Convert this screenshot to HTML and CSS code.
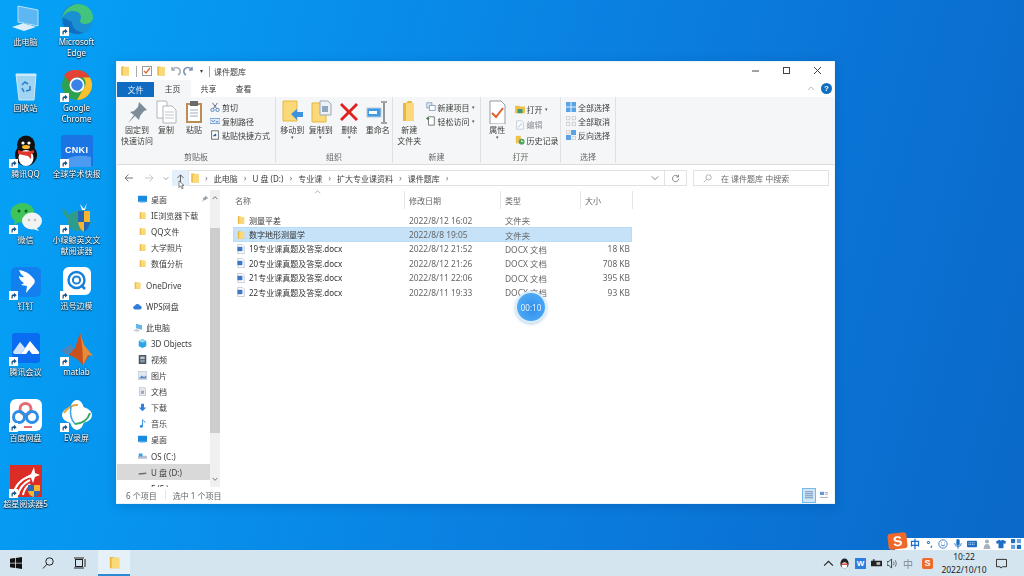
FILE: index.html
```html
<!DOCTYPE html>
<html lang="zh-CN">
<head>
<meta charset="utf-8">
<title>课件题库</title>
<link rel="stylesheet" href="styles.css">
</head>
<body>
<svg class="defs" width="0" height="0">
  <defs>
    <symbol id="folder" viewBox="0 0 16 16">
      <path d="M3 2h4l1 1h5v11H3z" fill="#e8b83e"/>
      <path d="M5 3h8v11H5z" fill="#fbd978"/>
    </symbol>
    <symbol id="doc" viewBox="0 0 12 14">
      <path d="M1.500.5h6l3 3v10h-9z" fill="#fff" stroke="#a9b4c4"/>
      <rect x="1" y="4" width="7" height="6" rx="1" fill="#3f78c6"/>
    </symbol>
    <symbol id="arrow" viewBox="0 0 9 9">
      <rect width="9" height="9" fill="#fff"/>
      <path d="M2.500 7.500V4.800q0-1.600 2-1.600H5V1.800l2.600 2.400L5 6.500V5H4.400q-.7 0-.7.8v1.700z" fill="#16558c"/>
    </symbol>
  </defs>
</svg>
<main class="desktop">
  <div class="shortcut"><svg class="ico" viewBox="0 0 32 32"><path d="M8 3l20 4v16L8 19z" fill="#5cb7f2" stroke="#b6e2fb"/><path d="M2 24l12-4 12 4-12 4z" fill="#dbeef9"/><path d="M14 20l6 2" stroke="#8fc4e6"/></svg><span class="lbl">此电脑</span></div>
  <div class="shortcut"><svg class="ico" viewBox="0 0 32 32"><circle cx="16" cy="16" r="15.500" fill="#1a8fd1"/><path d="M1 17C2 6 11 1 17 1c8 0 15 6 15 13 0 5-4 7-8 7-3 0-5-1-5-3 0-1 1-2 1-4 0-3-3-6-8-6-6 0-10 4-11 9z" fill="#43c47d"/><path d="M11 19c0 6 5 11 12 10-4 3-12 3-17-2-4-4-5-9-4-13 2 2 5 3 9 5z" fill="#0f6fc0"/></svg><svg class="sc" viewBox="0 0 9 9"><use href="#arrow"/></svg><span class="lbl">Microsoft<br>Edge</span></div>
  <div class="shortcut"><svg class="ico" viewBox="0 0 32 32"><path d="M6 5h20l-2 26H9z" fill="#9fd4f3" stroke="#cfeafa"/><path d="M6 5h20v2H6z" fill="#cfeafa"/><path d="M12 16l3-3 3 2M20 17l0 4-4 1M12 19l2 4" fill="none" stroke="#2b7fc6" stroke-width="1.600"/></svg><span class="lbl">回收站</span></div>
  <div class="shortcut"><svg class="ico" viewBox="0 0 32 32"><circle cx="16" cy="16" r="15" fill="#2fa04e"/><path d="M16 1a15 15 0 0 1 13 7.500H16a7.500 7.500 0 0 0-7 5L3 6a15 15 0 0 1 13-5z" fill="#e34234"/><path d="M29 8.500A15 15 0 0 1 16 31l6.500-11.500a7.500 7.500 0 0 0-.5-11z" fill="#fbc02d"/><circle cx="16" cy="16" r="7.500" fill="#fff"/><circle cx="16" cy="16" r="5.800" fill="#3b82e8"/></svg><svg class="sc" viewBox="0 0 9 9"><use href="#arrow"/></svg><span class="lbl">Google<br>Chrome</span></div>
  <div class="shortcut"><svg class="ico" viewBox="0 0 32 32"><ellipse cx="16" cy="20" rx="11" ry="11" fill="#111"/><ellipse cx="16" cy="10" rx="9" ry="9.500" fill="#111"/><ellipse cx="16" cy="23" rx="7.500" ry="8" fill="#fff"/><path d="M8 15q8 3 16 0v3l-3 1v5l-3-3-10-2z" fill="#e0352b"/><ellipse cx="16" cy="12" rx="4" ry="2" fill="#f5b82e"/><circle cx="13" cy="8" r="1.600" fill="#fff"/><circle cx="19" cy="8" r="1.600" fill="#fff"/></svg><svg class="sc" viewBox="0 0 9 9"><use href="#arrow"/></svg><span class="lbl">腾讯QQ</span></div>
  <div class="shortcut"><svg class="ico" viewBox="0 0 32 32"><rect width="32" height="32" rx="3" fill="#1b74e4"/><path d="M2 26q12-8 28-4v10H2z" fill="#4b9cf0"/></svg><b class="cnki">CNKI</b><svg class="sc" viewBox="0 0 9 9"><use href="#arrow"/></svg><span class="lbl">全球学术快报</span></div>
  <div class="shortcut"><svg class="ico" viewBox="0 0 32 32"><ellipse cx="12.500" cy="12" rx="12" ry="10" fill="#3dc45a"/><path d="M5 19l-1 5 5-3z" fill="#3dc45a"/><circle cx="9" cy="10" r="1.500" fill="#13622a"/><circle cx="16" cy="10" r="1.500" fill="#13622a"/><ellipse cx="22" cy="20" rx="10" ry="8.500" fill="#f1f3f2"/><path d="M26 26l3 4-6-2z" fill="#f1f3f2"/><circle cx="19" cy="19" r="1.200" fill="#bbb"/><circle cx="25" cy="19" r="1.200" fill="#bbb"/></svg><svg class="sc" viewBox="0 0 9 9"><use href="#arrow"/></svg><span class="lbl">微信</span></div>
  <div class="shortcut"><svg class="ico" viewBox="0 0 32 32"><path d="M1 8q5 1 7 6 8-7 18-3l4 11q-5 9-14 8Q7 29 6 17 2 14 1 8z" fill="#2f9c8b"/><path d="M17 10h12v11q-1 7-6 10-5-3-6-10z" fill="#2666b8"/><path d="M23 10h6v11h-6z" fill="#f5b52e"/><path d="M17 21h6v10q-5-3-6-10z" fill="#f5b52e"/><path d="M19 3l4 5 3-6-2 7h-3z" fill="#fff"/></svg><svg class="sc" viewBox="0 0 9 9"><use href="#arrow"/></svg><span class="lbl">小绿鲸英文文<br>献阅读器</span></div>
  <div class="shortcut"><svg class="ico" viewBox="0 0 32 32"><rect x="1" width="30" height="30" rx="5" fill="#1380f0"/><path d="M9 3q9 1 15 9 2 3-1 6l-7 8 1-7-6-1 3-2q-5-3-5-7 3 2 5 1-4-3-5-7z" fill="#fff"/></svg><svg class="sc" viewBox="0 0 9 9"><use href="#arrow"/></svg><span class="lbl">钉钉</span></div>
  <div class="shortcut"><svg class="ico" viewBox="0 0 32 32"><rect x="2" width="28" height="28" rx="6" fill="#fff"/><circle cx="15.500" cy="13" r="8" fill="none" stroke="#1681d8" stroke-width="2.400"/><circle cx="15.500" cy="13" r="3.600" fill="none" stroke="#1681d8" stroke-width="2"/><path d="M20 18l4 4" stroke="#1681d8" stroke-width="2.500"/></svg><svg class="sc" viewBox="0 0 9 9"><use href="#arrow"/></svg><span class="lbl">迅号边模</span></div>
  <div class="shortcut"><svg class="ico" viewBox="0 0 32 32"><rect x="2" width="28" height="30" rx="3" fill="#0a6cf0"/><path d="M3 19l7-10 5 6-4 6H6q-3 0-3-2z" fill="#cfe4fb"/><path d="M11 21l9-13 9 11q1 2-2 2h-5l-3-4-3 4z" fill="#fff"/></svg><svg class="sc" viewBox="0 0 9 9"><use href="#arrow"/></svg><span class="lbl">腾讯会议</span></div>
  <div class="shortcut"><svg class="ico" viewBox="0 0 32 32"><path d="M0 18l9-7 5 6-6 6z" fill="#4e86b8"/><path d="M8 22l6-7L19 0l4 12 5 11-6 9q-7-8-14-10z" fill="#c8501d"/><path d="M19 0l4 12 9 11-5-1-5 10q0-18-3-32z" fill="#e98a35"/></svg><svg class="sc" viewBox="0 0 9 9"><use href="#arrow"/></svg><span class="lbl">matlab</span></div>
  <div class="shortcut"><svg class="ico" viewBox="0 0 32 32"><rect width="32" height="32" rx="6" fill="#fff"/><circle cx="15.500" cy="10" r="5.500" fill="none" stroke="#e56a78" stroke-width="3"/><circle cx="9" cy="18" r="5.500" fill="none" stroke="#2b8ee8" stroke-width="3"/><circle cx="22" cy="18" r="5.500" fill="none" stroke="#2b8ee8" stroke-width="3"/><path d="M14 28h8" stroke="#e56a78" stroke-width="2"/></svg><svg class="sc" viewBox="0 0 9 9"><use href="#arrow"/></svg><span class="lbl">百度网盘</span></div>
  <div class="shortcut"><svg class="ico" viewBox="0 0 32 32"><ellipse cx="16" cy="16" rx="15" ry="9" fill="#fff"/><ellipse cx="16" cy="16" rx="8" ry="15" fill="#fff"/><path d="M3 14q6-9 14-8" fill="none" stroke="#e6a63c" stroke-width="2"/><path d="M29 14q-3 10-15 11" fill="none" stroke="#39a968" stroke-width="2"/><path d="M10 7q-2 12 4 18" fill="none" stroke="#42a5e0" stroke-width="1.600"/></svg><svg class="sc" viewBox="0 0 9 9"><use href="#arrow"/></svg><span class="lbl">EV录屏</span></div>
  <div class="shortcut"><svg class="ico" viewBox="0 0 32 32"><rect width="32" height="32" fill="#db2c25"/><path d="M24 2l1 6 5 2-5 2-2 6-2-5-5-1 5-3z" fill="#fff"/><path d="M3 30Q6 16 20 11M8 30q2-10 12-15M13 30q1-7 7-11" fill="none" stroke="#fff" stroke-width="2"/><path d="M18 20h12v6q-1 5-6 6-5-1-6-6z" fill="#2f69b5"/><path d="M24 20h6v6h-6zM18 26h6v6q-5-1-6-6z" fill="#f3b72f"/></svg><svg class="sc" viewBox="0 0 9 9"><use href="#arrow"/></svg><span class="lbl">超星阅读器5</span></div>
</main>

<section class="window">
  <header class="titlebar">
    <svg class="i12" viewBox="0 0 16 16"><use href="#folder"/></svg>
    <i class="tsep"></i>
    <svg class="i12" viewBox="0 0 12 12"><rect x="1.500" y="1.500" width="9" height="9" fill="#fff" stroke="#9a9a9a"/><path d="M3 6l2 2 4-5" fill="none" stroke="#d9663a" stroke-width="1.300"/></svg>
    <svg class="i12" viewBox="0 0 16 16"><use href="#folder"/></svg>
    <svg class="i12" viewBox="0 0 12 12"><path d="M9 10a4 4 0 1 0-5-6l-1 1M3 2v3h3" fill="none" stroke="#a9b0ba" stroke-width="1.600"/></svg>
    <svg class="i12" viewBox="0 0 12 12"><path d="M3 10a4 4 0 1 1 5-6l1 1M9 2v3H6" fill="none" stroke="#7d94b8" stroke-width="1.600"/></svg>
    <span class="caret">▾</span>
    <i class="tsep"></i>
    <span class="wintitle">课件题库</span>
    <div class="winctl">
      <svg viewBox="0 0 10 10"><path d="M1 5h7" stroke="#444"/></svg>
      <svg viewBox="0 0 10 10"><rect x="1.500" y="1.500" width="6" height="6" fill="none" stroke="#444"/></svg>
      <svg viewBox="0 0 10 10"><path d="M1 1l7 7M8 1L1 8" stroke="#444"/></svg>
    </div>
  </header>
  <nav class="tabs">
    <span class="tab file">文件</span>
    <span class="tab cur">主页</span>
    <span class="tab">共享</span>
    <span class="tab">查看</span>
    <svg class="chev" viewBox="0 0 10 6"><path d="M1 5l4-4 4 4" fill="none" stroke="#aaa"/></svg>
    <span class="help">?</span>
  </nav>
  <div class="ribbon">
    <div class="group g1">
      <div class="tools">
        <div class="big w30"><svg viewBox="0 0 24 24"><path d="M14 2l8 8-3 1-4 5-1 4-4-4-7 7 6-8-4-3 4-1 4-4z" fill="#7d8c99"/></svg><span>固定到<br>快速访问</span></div>
        <div class="big w26"><svg viewBox="0 0 24 24"><path d="M3 1h9l1 1v16H3z" fill="#fff" stroke="#aeb6c0"/><path d="M9 6h9l4 4v13H9z" fill="#fff" stroke="#aeb6c0"/><path d="M11 12h9M11 15h9M11 18h9" stroke="#bfc7d1"/></svg><span>复制</span></div>
        <div class="big w26"><svg viewBox="0 0 24 24"><rect x="4" y="3" width="16" height="20" fill="#b98d55"/><rect x="6" y="5" width="12" height="16" fill="#fff"/><rect x="8" y="1" width="8" height="5" fill="#6a6a6a"/><path d="M8 10h8M8 13h8M8 16h8" stroke="#9eaab8"/></svg><span>粘贴</span></div>
        <div class="smalls s-clip">
          <div><svg viewBox="0 0 12 12"><path d="M3 1l5 7M9 1L4 8" stroke="#557"/><circle cx="3" cy="9.500" r="2" fill="none" stroke="#3b74bf"/><circle cx="9" cy="9.500" r="2" fill="none" stroke="#3b74bf"/></svg><span>剪切</span></div>
          <div><svg viewBox="0 0 12 12"><rect y="3" width="12" height="6" fill="#e4eefb" stroke="#6d9bd6"/><path d="M2 5l2 2 2-2M7 7h3" stroke="#1d5fae" fill="none"/></svg><span>复制路径</span></div>
          <div><svg viewBox="0 0 12 12"><rect x="2" y="1" width="8" height="10" fill="#fff" stroke="#555"/><path d="M4 8V6l2-1v-1l2 2-2 2V7z" fill="#1b5fa6"/></svg><span>粘贴快捷方式</span></div>
        </div>
      </div>
      <div class="glabel">剪贴板</div>
    </div>
    <div class="group g2">
      <div class="tools">
        <div class="big w28"><svg viewBox="0 0 24 24"><path d="M3 1h14v20H3z" fill="#fbd978" stroke="#e8b83e"/><path d="M11 14l6-5v3h6v5h-6v3z" fill="#3b93e0"/></svg><span>移动到</span><em>▾</em></div>
        <div class="big w28"><svg viewBox="0 0 24 24"><path d="M3 3h14v19H3z" fill="#fbd978" stroke="#e8b83e"/><path d="M11 1h8l3 3v11H11z" fill="#eef2f6" stroke="#9aa7b5"/><rect x="13" y="6" width="6" height="6" fill="#8fa7bf"/></svg><span>复制到</span><em>▾</em></div>
        <div class="big w28"><svg viewBox="0 0 24 24"><path d="M3 5l2-2 7 7 7-7 2 2-7 7 7 7-2 2-7-7-7 7-2-2 7-7z" fill="#e02020"/></svg><span>删除</span><em>▾</em></div>
        <div class="big w28"><svg viewBox="0 0 24 24"><rect x="1" y="8" width="14" height="9" fill="#3f9be4" stroke="#bcd"/><rect x="3" y="11" width="8" height="3" fill="#fff"/><path d="M18 3v19M15 2h6M15 23h6" stroke="#555" stroke-width="1.200"/></svg><span>重命名</span></div>
      </div>
      <div class="glabel">组织</div>
    </div>
    <div class="group g3">
      <div class="tools">
        <div class="big w28"><svg viewBox="0 0 24 24"><path d="M6 3h3l2-2h4v20H6z" fill="#e8b83e"/><path d="M9 3h8v18H9z" fill="#fbd978"/></svg><span>新建<br>文件夹</span></div>
        <div class="smalls s-new">
          <div><svg viewBox="0 0 12 12"><rect x="1" y="1" width="6" height="6" fill="#e8f0fa" stroke="#7a98bc"/><rect x="4" y="4" width="7" height="6" fill="#fff" stroke="#7a98bc"/></svg><span>新建项目</span><em>▾</em></div>
          <div><svg viewBox="0 0 12 12"><path d="M3 1h7v10H3z" fill="#fff" stroke="#666"/><path d="M0 3h4M2 1v4" stroke="#3a7d44"/></svg><span>轻松访问</span><em>▾</em></div>
        </div>
      </div>
      <div class="glabel">新建</div>
    </div>
    <div class="group g4">
      <div class="tools">
        <div class="big w28"><svg viewBox="0 0 24 24"><path d="M5 1h11l4 4v19H5z" fill="#fff" stroke="#99a"/><path d="M7 13l4 4 7-9" fill="none" stroke="#e0602a" stroke-width="2"/></svg><span>属性</span><em>▾</em></div>
        <div class="smalls s-open">
          <div><svg viewBox="0 0 12 12"><path d="M0 2h5l1 1h6v8H0z" fill="#f0c04a"/><rect x="3" y="6" width="6" height="5" fill="#3a9a7a"/></svg><span>打开</span><em>▾</em></div>
          <div class="dim"><svg viewBox="0 0 12 12"><path d="M2 1h6l2 2v8H2z" fill="#fff" stroke="#b9c4d2"/><path d="M4 9l4-5" stroke="#8fb0d8"/></svg><span>编辑</span></div>
          <div><svg viewBox="0 0 12 12"><path d="M1 1h6v9H1z" fill="#f0c04a"/><circle cx="8" cy="8" r="3.500" fill="#4aa35c"/><path d="M8 6v2h2" stroke="#fff" fill="none"/></svg><span>历史记录</span></div>
        </div>
      </div>
      <div class="glabel">打开</div>
    </div>
    <div class="group g5">
      <div class="tools">
        <div class="smalls s-sel">
          <div><svg viewBox="0 0 12 12"><rect width="12" height="12" fill="#5aa3e6"/><path d="M6 0v12M0 6h12" stroke="#fff"/></svg><span>全部选择</span></div>
          <div><svg viewBox="0 0 12 12"><path d="M.5.500h4v4h-4zM7.500.500h4v4h-4zM.5 7.500h4v4h-4zM7.500 7.500h4v4h-4z" fill="none" stroke="#c4c9cf"/></svg><span>全部取消</span></div>
          <div><svg viewBox="0 0 12 12"><rect x="6" width="6" height="6" fill="#5aa3e6"/><rect y="6" width="6" height="6" fill="#5aa3e6"/><path d="M.5.500h4v4h-4zM7.500 7.500h4v4h-4z" fill="none" stroke="#c4c9cf"/></svg><span>反向选择</span></div>
        </div>
      </div>
      <div class="glabel">选择</div>
    </div>
  </div>
  <div class="addrbar">
    <svg class="nav" viewBox="0 0 10 10"><path d="M9 5H1M4.500 1.500L1 5l3.500 3.500" fill="none" stroke="#777"/></svg>
    <svg class="nav" viewBox="0 0 10 10"><path d="M1 5h8M5.500 1.500L9 5 5.500 8.500" fill="none" stroke="#c8c8c8"/></svg>
    <svg class="nav down" viewBox="0 0 10 10"><path d="M2 4l3 3 3-3" fill="none" stroke="#888"/></svg>
    <span class="upbtn"><svg viewBox="0 0 10 10"><path d="M5 9V1M1.500 4.500L5 1l3.500 3.500" fill="none" stroke="#555"/></svg><svg class="cursor" viewBox="0 0 8 12"><path d="M1 1v8l2-2 1.500 3.500 1.500-.6L4.500 6.500H7z" fill="#fff" stroke="#333" stroke-width=".7"/></svg></span>
    <div class="crumbs">
      <svg class="i12" viewBox="0 0 16 16"><use href="#folder"/></svg>
      <span class="gt first">›</span><span>此电脑</span>
      <span class="gt">›</span><span>U 盘 (D:)</span>
      <span class="gt">›</span><span>专业课</span>
      <span class="gt">›</span><span>扩大专业课资料</span>
      <span class="gt">›</span><span>课件题库</span>
      <span class="gt">›</span>
      <svg class="ddown" viewBox="0 0 10 10"><path d="M1 3l4 4 4-4" fill="none" stroke="#666"/></svg>
    </div>
    <span class="refresh"><svg viewBox="0 0 12 12"><path d="M9.500 3.500a4.200 4.200 0 1 0 .8 3M10 1v3H7" fill="none" stroke="#666"/></svg></span>
    <div class="search"><svg viewBox="0 0 12 12"><circle cx="7.500" cy="4.500" r="3.500" fill="none" stroke="#999"/><path d="M5 7l-4 4" stroke="#999"/></svg><span>在 课件题库 中搜索</span></div>
  </div>
  <div class="body">
    <aside class="side">
      <ul class="tree">
        <li><svg class="t-ico" viewBox="0 0 12 12"><rect y="1" width="12" height="8" fill="#1a8be0"/><rect x="2" y="9.500" width="8" height="1" fill="#7fbdf0"/></svg>桌面<svg class="pin" viewBox="0 0 10 10"><path d="M6 1l3 3-2 1-2 2-1-1-3 3 2-4-1-1 2-1z" fill="#9aa3ab"/></svg></li>
        <li><svg class="t-ico" viewBox="0 0 16 16"><use href="#folder"/></svg>IE浏览器下载</li>
        <li><svg class="t-ico" viewBox="0 0 16 16"><use href="#folder"/></svg>QQ文件</li>
        <li><svg class="t-ico" viewBox="0 0 16 16"><use href="#folder"/></svg>大学照片</li>
        <li><svg class="t-ico" viewBox="0 0 16 16"><use href="#folder"/></svg>数值分析</li>
        <li class="root gap"><svg class="t-ico" viewBox="0 0 16 16"><use href="#folder"/></svg>OneDrive</li>
        <li class="root gap"><svg class="t-ico" viewBox="0 0 12 12"><path d="M3 10a2.500 2.500 0 0 1-.5-5A3.500 3.500 0 0 1 9 4.500 2.800 2.800 0 0 1 9.500 10z" fill="#2f7fd8"/></svg>WPS网盘</li>
        <li class="root gap"><svg class="t-ico" viewBox="0 0 12 12"><path d="M4 1l8 2v6L4 7z" fill="#63b4ea"/><path d="M0 10l5-2 5 2-5 1.500z" fill="#c8ccd2"/></svg>此电脑</li>
        <li><svg class="t-ico" viewBox="0 0 12 12"><path d="M6 0l5 2.500v7L6 12 1 9.500v-7z" fill="#2aa5e6"/><path d="M6 5L1 2.500 6 0l5 2.500z" fill="#8fd8f8"/></svg>3D Objects</li>
        <li><svg class="t-ico" viewBox="0 0 12 12"><rect x="1" width="10" height="12" fill="#4a5560"/><rect x="3" y="2" width="6" height="3.500" fill="#b9c4cf"/><rect x="3" y="6.500" width="6" height="3.500" fill="#8a9aa8"/></svg>视频</li>
        <li><svg class="t-ico" viewBox="0 0 12 12"><rect y="1" width="12" height="10" fill="#dfe6ee" stroke="#8c98a6" stroke-width=".5"/><path d="M1 10l4-4 3 2 3-2v4z" fill="#5b8bc0"/></svg>图片</li>
        <li><svg class="t-ico" viewBox="0 0 12 12"><path d="M2 0h6l2 2v10H2z" fill="#e4e8ee" stroke="#95a1ae" stroke-width=".6"/><rect x="4" y="5" width="4" height="4" fill="#9aa7b5"/></svg>文档</li>
        <li><svg class="t-ico" viewBox="0 0 12 12"><path d="M4 1h4v5h3l-5 5-5-5h3z" fill="#2f82dc"/></svg>下载</li>
        <li><svg class="t-ico" viewBox="0 0 12 12"><path d="M6 1v8" stroke="#2b8be0" stroke-width="1.200"/><circle cx="4.500" cy="9.500" r="2" fill="#2b8be0"/><path d="M6 1q3 1 3.500 4" fill="none" stroke="#2b8be0"/></svg>音乐</li>
        <li><svg class="t-ico" viewBox="0 0 12 12"><rect y="1" width="12" height="8" fill="#1a8be0"/><rect x="2" y="9.500" width="8" height="1" fill="#7fbdf0"/></svg>桌面</li>
        <li class="drive"><svg class="t-ico" viewBox="0 0 12 12"><rect y="5" width="12" height="4" fill="#b9c2cc"/><path d="M1 2h5v4H1z" fill="#39a0e4"/></svg>OS (C:)</li>
        <li class="sel"><svg class="t-ico" viewBox="0 0 12 12"><path d="M1 7l10-1v2L1 9z" fill="#66707a"/></svg>U 盘 (D:)</li>
        <li><span class="t-ico"></span>F (F:)</li>
      </ul>
      <div class="scroll">
        <svg viewBox="0 0 10 6"><path d="M2 5l3-3 3 3" fill="none" stroke="#555"/></svg>
        <div class="track"><i class="thumb"></i></div>
        <svg viewBox="0 0 10 6"><path d="M2 1l3 3 3-3" fill="none" stroke="#555"/></svg>
      </div>
    </aside>
    <div class="files">
      <div class="row head"><span class="namecol">名称<svg class="sortmark" viewBox="0 0 8 4"><path d="M1 3.500L4 .5l3 3" fill="none" stroke="#aaa"/></svg></span><span>修改日期</span><span>类型</span><span>大小</span></div>
      <div class="row"><span class="n"><svg viewBox="0 0 16 16"><use href="#folder"/></svg>测量平差</span><span>2022/8/12 16:02</span><span>文件夹</span><span></span></div>
      <div class="row on"><span class="n"><svg viewBox="0 0 16 16"><use href="#folder"/></svg>数字地形测量学</span><span>2022/8/8 19:05</span><span>文件夹</span><span></span></div>
      <div class="row"><span class="n"><svg viewBox="0 0 12 14"><use href="#doc"/></svg>19专业课真题及答案.docx</span><span>2022/8/12 21:52</span><span>DOCX 文档</span><span class="sz">18 KB</span></div>
      <div class="row"><span class="n"><svg viewBox="0 0 12 14"><use href="#doc"/></svg>20专业课真题及答案.docx</span><span>2022/8/12 21:26</span><span>DOCX 文档</span><span class="sz">708 KB</span></div>
      <div class="row"><span class="n"><svg viewBox="0 0 12 14"><use href="#doc"/></svg>21专业课真题及答案.docx</span><span>2022/8/11 22:06</span><span>DOCX 文档</span><span class="sz">395 KB</span></div>
      <div class="row"><span class="n"><svg viewBox="0 0 12 14"><use href="#doc"/></svg>22专业课真题及答案.docx</span><span>2022/8/11 19:33</span><span>DOCX 文档</span><span class="sz">93 KB</span></div>
    </div>
  </div>
  <footer class="status">
    <span>6 个项目</span><i></i><span>选中 1 个项目</span>
    <div class="views">
      <span class="v on"><svg viewBox="0 0 12 10"><path d="M1 1h10M1 3.500h10M1 6h10M1 8.500h10" stroke="#5b7fa6"/></svg></span>
      <span class="v"><svg viewBox="0 0 12 10"><rect x="1" y="1" width="5" height="4" fill="#5b9bd8"/><path d="M7 2h4M7 4h4M1 8h10" stroke="#8a97a5"/></svg></span>
    </div>
  </footer>
</section>

<div class="timer">00:10</div>

<div class="ime">
  <span class="ime-s">S</span>
  <span class="ime-zh">中</span>
  <span class="ime-p">°,</span>
  <svg viewBox="0 0 12 12"><circle cx="6" cy="6" r="5" fill="none" stroke="#1c6fc4"/><path d="M3.500 7q2.500 2.500 5 0M4 4.500h.8M7.200 4.500H8" stroke="#1c6fc4" fill="none"/></svg>
  <svg viewBox="0 0 12 12"><rect x="4" y="0" width="4" height="8" rx="2" fill="#1c6fc4"/><path d="M2 5q0 4 4 4t4-4M6 9v3" stroke="#1c6fc4" fill="none"/></svg>
  <svg viewBox="0 0 12 12"><rect y="2" width="12" height="8" rx="1" fill="#1c6fc4"/><path d="M2 4.500h8M2 6.500h8" stroke="#fff" stroke-dasharray="1 1"/></svg>
  <svg viewBox="0 0 12 12"><circle cx="6" cy="3" r="2.500" fill="#a8b2bc"/><path d="M2 12q0-6 4-6t4 6z" fill="#a8b2bc"/></svg>
  <svg viewBox="0 0 12 12"><path d="M4 1L0 3l1 3 2-1v6h6V5l2 1 1-3-4-2-2 1z" fill="#1c6fc4"/></svg>
  <svg viewBox="0 0 12 12"><rect width="5" height="5" fill="#1c6fc4"/><rect x="7" width="5" height="5" fill="#6aa2dc"/><rect y="7" width="5" height="5" fill="#6aa2dc"/><rect x="7" y="7" width="5" height="5" fill="#1c6fc4"/></svg>
</div>

<footer class="taskbar">
  <span class="tb"><svg class="win" viewBox="0 0 12 12"><path d="M0 1.700l5-.7v4.700H0zM5.800.9L12 0v5.700H5.800zM0 6.400h5V11l-5-.7zM5.800 6.400H12V12l-6.200-.9z" fill="#111"/></svg></span>
  <span class="tb"><svg viewBox="0 0 12 12"><circle cx="7.500" cy="4.500" r="3.700" fill="none" stroke="#222"/><path d="M5 7.200L1 11.500" stroke="#222"/></svg></span>
  <span class="tb"><svg viewBox="0 0 12 12"><rect x="1.500" y="2.500" width="7" height="7" fill="none" stroke="#222"/><path d="M0 1h10M0 11h10M11 2v8" stroke="#222"/></svg></span>
  <span class="tb active"><svg viewBox="0 0 16 16"><use href="#folder"/></svg></span>
  <div class="tray">
    <svg viewBox="0 0 10 6"><path d="M1 5l4-4 4 4" fill="none" stroke="#222"/></svg>
    <svg viewBox="0 0 12 12"><ellipse cx="6" cy="6" rx="4.500" ry="5.500" fill="#222"/><ellipse cx="6" cy="8" rx="3" ry="3.500" fill="#fff"/><path d="M2 6h8v1.500H2z" fill="#d33"/></svg>
    <span class="w-box">W</span>
    <svg viewBox="0 0 12 12"><rect y="3" width="12" height="6" fill="#222"/><rect x="2" y="1.500" width="2" height="1.500" fill="#222"/><rect x="6" y="4.500" width="4" height="3" fill="#bbb"/></svg>
    <svg viewBox="0 0 12 12"><path d="M0 4h2l3-3v10L2 8H0z" fill="none" stroke="#333"/><path d="M7 4q1.500 2 0 4M9 2.500q2.500 3.500 0 7" fill="none" stroke="#666"/></svg>
    <span class="t-zh">中</span>
    <span class="t-s">S</span>
    <div class="clock"><span>10:22</span><span>2022/10/10</span></div>
    <svg class="note" viewBox="0 0 12 12"><path d="M.5 1.500h11v8H7L5.500 11 4.500 9.500h-4z" fill="none" stroke="#222"/></svg>
  </div>
</footer>
</body>
</html>
```
FILE: styles.css
```css
* { box-sizing: border-box; margin: 0; padding: 0; }
html, body { width: 1024px; height: 576px; overflow: hidden; }
body {
  display: flex;
  flex-direction: column;
  font-family: "Noto Sans", "Noto Sans CJK SC", sans-serif;
  font-size: 8px;
  color: #3c3c3c;
  background: linear-gradient(105deg, #05a3f7 0%, #0794ee 22%, #0a82e2 50%, #0a74d6 75%, #0a68c8 100%);
  filter: blur(.45px);
}
svg { display: block; flex: none; }
.defs { position: absolute; }
ul { list-style: none; }
i, em { font-style: normal; }

/* desktop */
.desktop {
  flex: 1;
  display: grid;
  grid-template-columns: 51px 51px;
  grid-auto-rows: 66px;
  padding: 3px 0 0;
  align-content: start;
  justify-content: start;
}
.shortcut {
  position: relative;
  display: flex;
  flex-direction: column;
  align-items: center;
  color: #fff;
  text-shadow: 0 0 2px #123, 0 1px 1px #123;
  line-height: 11px;
  text-align: center;
}
.ico { width: 32px; height: 32px; margin-bottom: 1px; }
.sc { position: absolute; left: 9px; top: 24px; width: 9px; height: 9px; }
.lbl { white-space: nowrap; }
.cnki { position: absolute; left: 14px; top: 10px; font: 700 9px "Liberation Sans", sans-serif; letter-spacing: .3px; text-shadow: none; }

/* window */
.window {
  position: absolute;
  left: 116px;
  top: 61px;
  width: 719px;
  height: 443px;
  background: #fff;
  border: 1px solid #e8f4fc;
  display: flex;
  flex-direction: column;
  box-shadow: 0 2px 10px rgba(0, 30, 80, .18);
}
.titlebar { height: 18px; display: flex; align-items: center; gap: 1px; padding-left: 2px; flex: none; }
.i12 { width: 12px; height: 12px; }
.titlebar .i12 { margin-right: 1px; }
.tsep { width: 1px; height: 11px; background: #aaa; margin: 0 3px; }
.caret { font-size: 6px; width: 8px; text-align: center; }
.wintitle { font-size: 8px; }
.winctl { margin-left: auto; display: flex; align-items: center; gap: 21px; padding-right: 11px; }
.winctl svg { width: 10px; height: 10px; }

.tabs { height: 17px; display: flex; align-items: center; flex: none; position: relative; }
.tab { width: 35px; height: 100%; display: flex; align-items: center; justify-content: center; font-size: 8px; }
.tab.file { width: 37px; background: #0f6cc0; color: #e8f2fb; height: 15px; margin-top: 1px; }
.tab.cur { background: #f5f6f7; width: 37px; }
.chev { width: 8px; height: 5px; margin-left: auto; margin-right: 6px; }
.help { width: 11px; height: 11px; border-radius: 50%; background: #0f6cc0; color: #fff; font: 700 8px/11px "Liberation Sans", sans-serif; text-align: center; margin-right: 2px; }

.ribbon { height: 68px; flex: none; background: #f5f6f7; display: flex; border-bottom: 1px solid #dcdcdc; }
.group { display: flex; flex-direction: column; border-right: 1px solid #dfe1e3; height: 66px; }
.g1 { width: 159px; }
.g2 { width: 117px; }
.g3 { width: 88px; }
.g4 { width: 80px; }
.g5 { width: 55px; }
.tools { flex: 1; display: flex; padding: 3px 0 0 5px; }
.g2 .tools { padding-left: 2px; }
.g3 .tools { padding-left: 2px; }
.g4 .tools { padding-left: 2px; }
.glabel { height: 12px; text-align: center; color: #666; line-height: 12px; font-size: 8px; }
.big { display: flex; flex-direction: column; align-items: center; line-height: 11px; font-size: 8px; text-align: center; white-space: nowrap; }
.big svg { width: 24px; height: 24px; }
.big em { font-size: 5px; line-height: 5px; color: #555; }
.w30 { width: 30px; }
.w26 { width: 28px; }
.w28 { width: 28.5px; }
.smalls { display: flex; flex-direction: column; gap: 2px; padding-left: 2px; margin-top: 1px; }
.smalls div { display: flex; align-items: center; gap: 2px; height: 12px; white-space: nowrap; font-size: 8px; }
.smalls svg { width: 10px; height: 10px; }
.smalls em { font-size: 5px; color: #555; }
.s-open { gap: 3.500px; padding-left: 3px; margin-top: 3px; }
.s-sel { padding-left: 0; margin-left: 0; }
.dim { color: #8a8f95; }

/* address bar */
.addrbar { height: 25px; flex: none; display: flex; align-items: center; padding: 1px 0 0 7px; }
.nav { width: 10px; height: 10px; margin-right: 10px; }
.nav.down { width: 8px; height: 8px; margin-right: 2px; margin-left: -2px; }
.upbtn { position: relative; width: 16px; height: 16px; background: #e3effa; display: flex; align-items: center; justify-content: center; }
.upbtn > svg:first-child { width: 9px; height: 9px; }
.cursor { position: absolute; left: 6px; top: 10px; width: 7px; height: 10px; }
.crumbs { width: 477px; height: 16px; border: 1px solid #e2e2e2; display: flex; align-items: center; gap: 6px; }
.crumbs .gt { color: #777; font-size: 9px; margin: 0 0 1px; }
.crumbs .gt.first { margin-left: -2px; }
.crumbs .i12 { margin-right: 0; }
.ddown { width: 8px; height: 8px; margin-left: auto; margin-right: 5px; }
.refresh { width: 22px; height: 16px; border: 1px solid #e2e2e2; border-left: 0; display: flex; align-items: center; justify-content: center; }
.refresh svg { width: 9px; height: 9px; }
.search { margin-left: 6px; width: 136px; height: 16px; border: 1px solid #e2e2e2; display: flex; align-items: center; gap: 9px; padding-left: 9px; color: #666; }
.search svg { width: 9px; height: 9px; }

/* main */
.body { flex: 1; min-height: 0; display: flex; }
.side { width: 103px; display: flex; flex: none; overflow: hidden; }
.tree { flex: 1; min-width: 0; overflow: hidden; padding-top: 1px; }
.tree li { height: 16px; display: flex; align-items: center; padding-left: 21px; position: relative; white-space: nowrap; gap: 4px; font-size: 8px; }
.tree li.root { padding-left: 16px; }
.tree li.gap { margin-top: 5px; }
.tree li.gap:nth-child(6) { margin-top: 6px; }
.tree li.drive { margin-top: 1px; }
.tree li.sel { background: #d9d9d9; }
.t-ico { width: 9px; height: 9px; display: block; flex: none; }
.pin { position: absolute; right: 1px; top: 4px; width: 8px; height: 8px; }
.scroll { width: 10px; background: #f0f0f0; display: flex; flex-direction: column; align-items: center; flex: none; }
.scroll svg { width: 8px; height: 5px; margin: 5px 0; }
.track { flex: 1; width: 100%; padding-top: 23px; }
.thumb { display: block; height: 205px; background: #cdcdcd; }
.files { flex: 1; padding: 0 0 0 13px; }
.row { width: 399px; height: 14.4px; display: grid; grid-template-columns: 171px 96px 80px 52px; align-items: center; border: 1px solid transparent; white-space: nowrap; font-size: 8.400px; color: #666; }
.row span { padding-left: 4px; }
.row.head { height: 20px; margin-bottom: 3px; color: #666; font-size: 8px; }
.row.head span { height: 100%; display: flex; align-items: center; border-right: 1px solid #e5e5e5; padding-left: 4px; }
.row.head span.namecol { padding-left: 1px; position: relative; }
.sortmark { position: absolute; left: 80px; top: -1px; width: 7px; height: 4px; }
.row .n { color: #333; display: flex; align-items: center; gap: 3px; padding-left: 2px; font-size: 8px; }
.row .n svg { width: 10px; height: 10px; }
.row.on { background: #c6e2f9; border-color: #b9dcf7; }
.row .sz { text-align: right; padding-right: 3px; }

.status { height: 16px; flex: none; display: flex; align-items: center; padding-left: 9px; color: #666; font-size: 8px; }
.status i { width: 1px; height: 10px; background: #e5e5e5; margin: 0 7px 0 8px; }
.views { margin-left: auto; display: flex; gap: 1px; padding-right: 3px; }
.v { width: 14px; height: 15px; display: flex; align-items: center; justify-content: center; }
.v.on { background: #cfe6f8; border: 1px solid #7ab8e8; }
.v svg { width: 10px; height: 8px; }

/* timer */
.timer {
  position: absolute;
  left: 515px;
  top: 291px;
  width: 32px;
  height: 32px;
  border-radius: 50%;
  background: radial-gradient(circle at 55% 55%, #2f8fee, #5cb4f6);
  border: 2px solid #d9ecfb;
  box-shadow: 0 1px 3px rgba(60, 120, 180, .4);
  color: #eaf5ff;
  display: flex;
  align-items: center;
  justify-content: center;
  font-size: 8px;
}

/* IME bar */
.ime { position: absolute; right: 0; top: 538px; width: 129px; height: 12px; background: #fff; display: flex; align-items: center; gap: 4.500px; padding-left: 15px; }
.ime svg { width: 10px; height: 10px; }
.ime-s { position: absolute; left: -7px; top: -5px; width: 19px; height: 16px; background: #ef6a2a; border-radius: 3px; color: #fff; font: 700 14px/16px "Liberation Sans", sans-serif; text-align: center; transform: rotate(-6deg); }
.ime-zh { color: #1c6fc4; font-size: 10px; font-weight: 700; line-height: 12px; }
.ime-p { color: #1c6fc4; font-size: 9px; font-weight: 700; line-height: 12px; margin: 0 1px 0 2px; }

/* taskbar */
.taskbar { height: 26px; flex: none; background: #d4e5f0; display: flex; align-items: stretch; }
.tb { width: 32px; display: flex; align-items: center; justify-content: center; }
.tb svg { width: 12px; height: 12px; }
.tb.active { background: #e6f0f7; border-bottom: 2px solid #2a8bd4; margin-left: 2px; }
.tb.active svg { width: 15px; height: 15px; }
.tray { margin-left: auto; display: flex; align-items: center; gap: 5px; padding-right: 17px; }
.tray svg { width: 11px; height: 11px; }
.w-box { width: 11px; height: 11px; background: #2a7fe0; color: #fff; font: 700 8px/11px "Liberation Sans", sans-serif; text-align: center; }
.t-zh { color: #888; font-size: 10px; margin-right: 4px; }
.t-s { width: 11px; height: 11px; background: #ef6a2a; border-radius: 2px; color: #fff; font: 700 9px/11px "Liberation Sans", sans-serif; text-align: center; }
.clock { width: 50px; margin: 0 2px 0 1px; display: flex; flex-direction: column; align-items: center; line-height: 13px; font-size: 8.500px; color: #222; }
.tray .note { width: 11px; height: 11px; }
```
